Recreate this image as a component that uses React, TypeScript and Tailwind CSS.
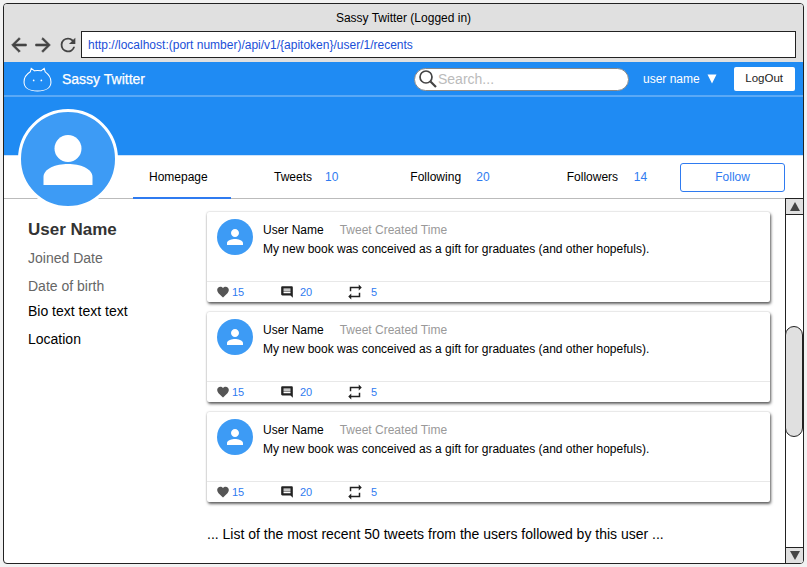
const PERSON = "M12 12c2.21 0 4-1.79 4-4s-1.79-4-4-4-4 1.79-4 4 1.79 4 4 4zm0 2c-2.67 0-8 1.34-8 4v2h16v-2c0-2.66-5.33-4-8-4z";

function Person({ className }: { className: string }) {
  return (
    <svg viewBox="0 0 24 24" className={className} fill="#ffffff">
      <path d={PERSON} />
    </svg>
  );
}

function Tweet() {
  return (
    <div className="h-[90px] w-[563px] shrink-0 rounded-[2px] bg-white shadow-[0_0_2px_rgba(0,0,0,0.25),1px_2px_3px_rgba(0,0,0,0.6)] flex flex-col">
      <div className="h-[70px] flex pl-[10px] pt-[7px] border-b border-[#e8e8e8]">
        <div className="w-9 h-9 rounded-full bg-[#3d9bf5] flex items-center justify-center">
          <Person className="w-6 h-6" />
        </div>
        <div className="ml-[10px] text-[12px]">
          <div className="flex leading-[20px] pt-[1px]">
            <span className="text-black">User Name</span>
            <span className="ml-[16px] text-[#999999]">Tweet Created Time</span>
          </div>
          <div className="text-black leading-[19px]">My new book was conceived as a gift for graduates (and other hopefuls).</div>
        </div>
      </div>
      <div className="flex-1 flex items-center pl-[9px] text-[11px] text-[#2f7bf0]">
        <svg viewBox="0 0 24 24" className="w-[14px] h-[14px]" fill="#555555">
          <path d="M12 21.35l-1.45-1.32C5.4 15.36 2 12.28 2 8.5 2 5.42 4.42 3 7.5 3c1.74 0 3.41.81 4.5 2.09C13.09 3.81 14.76 3 16.5 3 19.58 3 22 5.42 22 8.5c0 3.78-3.4 6.86-8.55 11.54L12 21.35z" />
        </svg>
        <span className="ml-[2px] w-[12px]">15</span>
        <svg viewBox="0 0 24 24" className="ml-[36px] w-[14px] h-[14px]" fill="#222222">
          <path transform="matrix(-1 0 0 1 24 0)" d="M20 2H4c-1.1 0-1.99.9-1.99 2L2 22l4-4h14c1.1 0 2-.9 2-2V4c0-1.1-.9-2-2-2zm-2 12H6v-2h12v2zm0-3H6V9h12v2zm0-3H6V6h12v2z" />
        </svg>
        <span className="ml-[6px] w-[12px]">20</span>
        <svg viewBox="0 0 24 24" className="ml-[34px] w-[18px] h-[18px]" fill="#222222">
          <path d="M7 7h10v3l4-4-4-4v3H5v6h2V7zm10 10H7v-3l-4 4 4 4v-3h12v-6h-2v4z" />
        </svg>
        <span className="ml-[7px]">5</span>
      </div>
    </div>
  );
}

function Stat({ label, count, labelW, ml }: { label: string; count: string; labelW: string; ml: string }) {
  return (
    <div className={`flex items-center ${ml}`}>
      <span className={`text-black ${labelW}`}>{label}</span>
      <span className="text-[#2f7bf0]">{count}</span>
    </div>
  );
}

export default function App() {
  return (
    <div className="w-[807px] h-[567px] bg-[#f2f2f2] p-[3px] font-['Liberation_Sans',Arial,sans-serif] overflow-hidden">
      <div className="relative w-[801px] h-[561px] border border-[#222222] rounded-[4px] bg-white overflow-hidden flex flex-col">
        {/* Browser chrome */}
        <div className="h-[58px] shrink-0 bg-[#e0e0e0] flex flex-col">
          <div className="h-[27px] flex items-center justify-center text-[12px] text-black">Sassy Twitter (Logged in)</div>
          <div className="flex items-center pl-[4px]">
            <svg viewBox="0 0 24 24" className="shrink-0 w-[22px] h-[22px]" fill="#444444" stroke="#444444" strokeWidth="0.8">
              <path d="M20 11H7.83l5.59-5.59L12 4l-8 8 8 8 1.41-1.41L7.83 13H20v-2z" />
            </svg>
            <svg viewBox="0 0 24 24" className="shrink-0 ml-[2px] w-[22px] h-[22px]" fill="#444444" stroke="#444444" strokeWidth="0.8">
              <path d="M4 11h12.17l-5.59-5.59L12 4l8 8-8 8-1.41-1.41L16.17 13H4v-2z" />
            </svg>
            <svg viewBox="0 0 24 24" className="shrink-0 ml-[3px] w-[22px] h-[22px]" fill="#444444">
              <path d="M17.65 6.35A7.96 7.96 0 0 0 12 4a8 8 0 1 0 7.73 10h-2.08A6 6 0 1 1 12 6c1.66 0 3.14.69 4.22 1.78L13 11h7V4l-2.35 2.35z" />
            </svg>
            <div className="ml-[2px] w-[715px] h-[27px] shrink-0 border border-[#222222] bg-white flex items-center pl-[6px] text-[12px] text-[#1a4fd8]">
              http://localhost:(port number)/api/v1/{"{apitoken}"}/user/1/recents
            </div>
          </div>
        </div>

        {/* Nav */}
        <div className="h-[33px] shrink-0 bg-[#1f8bf3] flex items-center pl-[19px] pt-[1px] text-white">
          <svg viewBox="0 0 30 26" className="w-[29px] h-[25px]" fill="none" stroke="#ffffff" strokeWidth="1.1">
            <path d="M7.5 5 L8.5 1.5 L12 4 Q15 3.2 18.5 4 L22 1.5 L23 5 C26.5 7.5 29 11 29 15.5 C29 21.5 23.5 25 15 25 C6.5 25 1 21.5 1 15.5 C1 11 3.5 7.5 7.5 5 Z" />
            <circle cx="11" cy="14" r="0.9" fill="#ffffff" stroke="none" />
            <circle cx="19" cy="14" r="0.9" fill="#ffffff" stroke="none" />
          </svg>
          <span className="ml-[10px] w-[352px] text-[14px] font-medium [-webkit-text-stroke:0.25px_white]">Sassy Twitter</span>
          <div className="w-[215px] h-[23px] rounded-full bg-white border border-[#888888] flex items-center pl-[3px]">
            <svg viewBox="0 0 20 20" className="w-[20px] h-[20px]" fill="none" stroke="#444444">
              <circle cx="8" cy="8" r="6" strokeWidth="1.7" />
              <path d="M12.5 12.5 L18 18" strokeWidth="2.2" />
            </svg>
            <span className="text-[14px] text-[#bbbbbb]">Search...</span>
          </div>
          <span className="ml-[14px] text-[12px]">user name</span>
          <svg viewBox="0 0 10 10" className="ml-[7px] w-[10px] h-[10px]" fill="#ffffff">
            <path d="M0.5 0.5 H9.5 L5 9.5 Z" />
          </svg>
          <div className="ml-[17px] w-[61px] h-[24px] rounded-[2px] bg-white flex items-center justify-center text-[11.5px] text-[#222222]">LogOut</div>
        </div>

        {/* Banner */}
        <div className="h-[60px] shrink-0 bg-[#1f8bf3] border-t-2 border-[#5aa9f6]"></div>

        {/* Tabs */}
        <div className="h-[44px] shrink-0 border-t border-[#cde3fb] border-b border-b-[#bbbbbb] flex items-center pl-[129px] pb-[1px] text-[12px]">
          <div className="relative w-[98px] h-[41px] flex items-center pl-[16px] text-black">
            Homepage
            <div className="absolute left-0 right-0 bottom-[-2px] h-[2px] bg-[#2f7bf0]"></div>
          </div>
          <Stat label="Tweets" count="10" labelW="w-[51px]" ml="ml-[43px]" />
          <Stat label="Following" count="20" labelW="w-[66px]" ml="ml-[72px]" />
          <Stat label="Followers" count="14" labelW="w-[67px]" ml="ml-[77px]" />
          <div className="ml-[33px] w-[105px] h-[29px] mt-[1px] rounded-[3px] border border-[#2f7bf0] flex items-center justify-center text-[#2f7bf0]">Follow</div>
        </div>

        {/* Avatar */}
        <div className="absolute left-[14px] top-[105px] w-[100px] h-[100px] rounded-full bg-[#3d9bf5] border-[3px] border-white flex items-center justify-center">
          <svg viewBox="0 0 50 50" className="w-[50px] h-[50px] mt-[2px]" fill="#ffffff">
            <circle cx="25" cy="13.5" r="13.5" />
            <path d="M0.5 50 V42 C0.5 33.5 13 29 25 29 C37 29 49.5 33.5 49.5 42 V50 Z" />
          </svg>
        </div>

        {/* Body */}
        <div className="flex-1 flex min-h-0">
          <div className="w-[203px] shrink-0 pl-[24px] pt-[20px]">
            <div className="text-[17px] leading-[22px] font-bold text-[#333333]">User Name</div>
            <div className="mt-[7px] text-[14px] leading-[20px] text-[#666666]">Joined Date</div>
            <div className="mt-[8px] text-[14px] leading-[20px] text-[#666666]">Date of birth</div>
            <div className="mt-[5px] text-[14px] leading-[20px] text-black">Bio text text text</div>
            <div className="mt-[8px] text-[14px] leading-[20px] text-black">Location</div>
          </div>
          <div className="w-[578px] shrink-0 pt-[13px] flex flex-col gap-[10px]">
            <Tweet />
            <Tweet />
            <Tweet />
            <div className="mt-[12px] text-[14px] leading-[20px] text-black">... List of the most recent 50 tweets from the users followed by this user ...</div>
          </div>
          {/* Scrollbar */}
          <div className="w-[18px] shrink-0 mt-[-1px] border-l border-t border-[#222222] bg-white flex flex-col">
            <div className="h-[16px] shrink-0 bg-[#e0e0e0] border-b border-[#222222] flex items-center justify-center">
              <svg viewBox="0 0 10 9" className="w-[10px] h-[9px]" fill="#444444"><path d="M5 0 L10 9 H0 Z" /></svg>
            </div>
            <div className="flex-1 pt-[111px]">
              <div className="h-[111px] ml-[-1px] w-[18px] bg-[#e0e0e0] border border-[#222222] rounded-b-[9px] rounded-t-[9px]"></div>
            </div>
            <div className="h-[16px] shrink-0 bg-[#e0e0e0] border-t border-[#222222] flex items-center justify-center">
              <svg viewBox="0 0 10 9" className="w-[10px] h-[9px]" fill="#444444"><path d="M0 0 H10 L5 9 Z" /></svg>
            </div>
          </div>
        </div>
      </div>
    </div>
  );
}
